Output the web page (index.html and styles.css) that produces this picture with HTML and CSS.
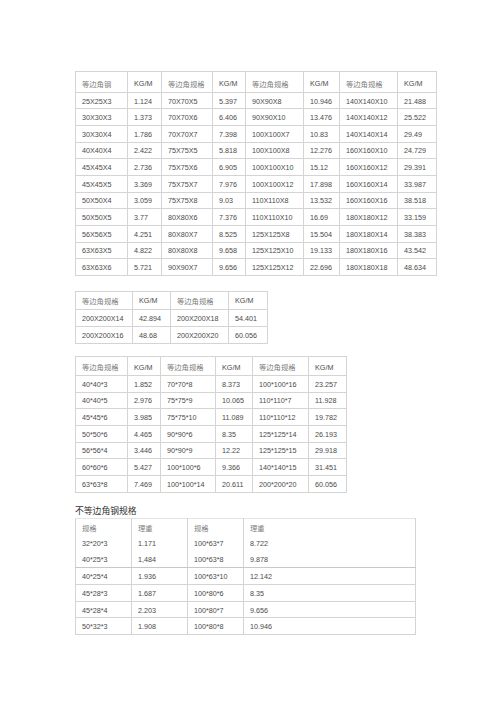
FILE: index.html
```html
<!DOCTYPE html>
<html>
<head>
<meta charset="utf-8">
<link rel="stylesheet" href="styles.css">
</head>
<body>
<div class="page">
  <table class="t t1">
    <colgroup><col class="w52"><col class="w34"><col class="w51"><col class="w33"><col class="w58"><col class="w36"><col class="w58"><col class="w39"></colgroup>
    <tr class="head1"><td class="cn">等边角钢</td><td>KG/M</td><td class="cn">等边角规格</td><td>KG/M</td><td class="cn">等边角规格</td><td>KG/M</td><td class="cn">等边角规格</td><td>KG/M</td></tr>
    <tr><td>25X25X3</td><td>1.124</td><td>70X70X5</td><td>5.397</td><td>90X90X8</td><td>10.946</td><td>140X140X10</td><td>21.488</td></tr>
    <tr><td>30X30X3</td><td>1.373</td><td>70X70X6</td><td>6.406</td><td>90X90X10</td><td>13.476</td><td>140X140X12</td><td>25.522</td></tr>
    <tr><td>30X30X4</td><td>1.786</td><td>70X70X7</td><td>7.398</td><td>100X100X7</td><td>10.83</td><td>140X140X14</td><td>29.49</td></tr>
    <tr><td>40X40X4</td><td>2.422</td><td>75X75X5</td><td>5.818</td><td>100X100X8</td><td>12.276</td><td>160X160X10</td><td>24.729</td></tr>
    <tr><td>45X45X4</td><td>2.736</td><td>75X75X6</td><td>6.905</td><td>100X100X10</td><td>15.12</td><td>160X160X12</td><td>29.391</td></tr>
    <tr><td>45X45X5</td><td>3.369</td><td>75X75X7</td><td>7.976</td><td>100X100X12</td><td>17.898</td><td>160X160X14</td><td>33.987</td></tr>
    <tr><td>50X50X4</td><td>3.059</td><td>75X75X8</td><td>9.03</td><td>110X110X8</td><td>13.532</td><td>160X160X16</td><td>38.518</td></tr>
    <tr><td>50X50X5</td><td>3.77</td><td>80X80X6</td><td>7.376</td><td>110X110X10</td><td>16.69</td><td>180X180X12</td><td>33.159</td></tr>
    <tr><td>56X56X5</td><td>4.251</td><td>80X80X7</td><td>8.525</td><td>125X125X8</td><td>15.504</td><td>180X180X14</td><td>38.383</td></tr>
    <tr><td>63X63X5</td><td>4.822</td><td>80X80X8</td><td>9.658</td><td>125X125X10</td><td>19.133</td><td>180X180X16</td><td>43.542</td></tr>
    <tr><td>63X63X6</td><td>5.721</td><td>90X90X7</td><td>9.656</td><td>125X125X12</td><td>22.696</td><td>180X180X18</td><td>48.634</td></tr>
  </table>

  <table class="t t2">
    <colgroup><col class="w57"><col class="w38"><col class="w58"><col class="w39"></colgroup>
    <tr class="head2"><td class="cn">等边角规格</td><td>KG/M</td><td class="cn">等边角规格</td><td>KG/M</td></tr>
    <tr class="r17"><td>200X200X14</td><td>42.894</td><td>200X200X18</td><td>54.401</td></tr>
    <tr class="r17"><td>200X200X16</td><td>48.68</td><td>200X200X20</td><td>60.056</td></tr>
  </table>

  <table class="t t3">
    <colgroup><col class="w52"><col class="w33"><col class="w55"><col class="w37"><col class="w56"><col class="w38"></colgroup>
    <tr class="head3"><td class="cn">等边角规格</td><td class="low">KG/M</td><td class="cn">等边角规格</td><td class="low">KG/M</td><td class="cn">等边角规格</td><td class="low">KG/M</td></tr>
    <tr><td>40*40*3</td><td>1.852</td><td>70*70*8</td><td>8.373</td><td>100*100*16</td><td>23.257</td></tr>
    <tr><td>40*40*5</td><td>2.976</td><td>75*75*9</td><td>10.065</td><td>110*110*7</td><td>11.928</td></tr>
    <tr><td>45*45*6</td><td>3.985</td><td>75*75*10</td><td>11.089</td><td>110*110*12</td><td>19.782</td></tr>
    <tr><td>50*50*6</td><td>4.465</td><td>90*90*6</td><td>8.35</td><td>125*125*14</td><td>26.193</td></tr>
    <tr><td>56*56*4</td><td>3.446</td><td>90*90*9</td><td>12.22</td><td>125*125*15</td><td>29.918</td></tr>
    <tr><td>60*60*6</td><td>5.427</td><td>100*100*6</td><td>9.366</td><td>140*140*15</td><td>31.451</td></tr>
    <tr><td>63*63*8</td><td>7.469</td><td>100*100*14</td><td>20.611</td><td>200*200*20</td><td>60.056</td></tr>
  </table>

  <div class="title">不等边角钢规格</div>

  <table class="t t4">
    <colgroup><col class="w56"><col class="w56"><col class="w56"><col class="w172"></colgroup>
    <tr class="nob"><td class="cn">规格</td><td class="cn">理重</td><td class="cn">规格</td><td class="cn">理重</td></tr>
    <tr class="nob"><td>32*20*3</td><td>1.171</td><td>100*63*7</td><td>8.722</td></tr>
    <tr class="dark"><td>40*25*3</td><td>1,484</td><td>100*63*8</td><td>9.878</td></tr>
    <tr><td>40*25*4</td><td>1.936</td><td>100*63*10</td><td>12.142</td></tr>
    <tr><td>45*28*3</td><td>1.687</td><td>100*80*6</td><td>8.35</td></tr>
    <tr><td>45*28*4</td><td>2.203</td><td>100*80*7</td><td>9.656</td></tr>
    <tr><td>50*32*3</td><td>1.908</td><td>100*80*8</td><td>10.946</td></tr>
  </table>
</div>
</body>
</html>
```

FILE: styles.css
```css
html, body {
  margin: 0;
  padding: 0;
  background: #ffffff;
}

body {
  font-family: "Liberation Sans", Arial, sans-serif;
  font-size: 7.2px;
  color: #4a4a4a;
}

.page {
  display: flex;
  flex-direction: column;
  align-items: flex-start;
  padding: 71px 0 0 75px;
}

.t {
  border-collapse: collapse;
  table-layout: fixed;
}

.t td {
  border: 1px solid #d4d4d4;
  padding: 2px 0 0 6px;
  line-height: 8px;
  white-space: nowrap;
  overflow: hidden;
  vertical-align: middle;
}

.t tr {
  height: 16.67px;
}

.t .cn {
  font-family: "Noto Sans CJK SC", sans-serif;
  font-size: 7.3px;
  color: #808080;
}

.t1 { width: 361px; }
.t2 { width: 192px; margin-top: 15px; }
.t3 { width: 271px; margin-top: 12px; }
.t4 { width: 340px; }

.t1 .head1 { height: 20.7px; }
.t1 .head1 td { padding-top: 5px; }
.t2 .head2 { height: 18px; }
.t2 .r17 { height: 17px; }
.t3 .head3 { height: 19px; }
.t3 .head3 .low { padding-top: 4px; }

.t4 .nob td {
  border-bottom: none;
  border-top: none;
}
.t4 tr:first-child td {
  border-top: 1px solid #e4e4e4;
}
.t4 .dark td {
  border-top: none;
  border-bottom: 1px solid #c8c8c8;
}

.title {
  margin: 12px 0 1px 0;
  font-family: "Noto Sans CJK SC", sans-serif;
  font-size: 8.8px;
  line-height: 12px;
  color: #333333;
}

.w33 { width: 33px; }
.w34 { width: 34px; }
.w36 { width: 36px; }
.w37 { width: 37px; }
.w38 { width: 38px; }
.w39 { width: 39px; }
.w51 { width: 51px; }
.w52 { width: 52px; }
.w55 { width: 55px; }
.w56 { width: 56px; }
.w57 { width: 57px; }
.w58 { width: 58px; }
.w172 { width: 172px; }
```
